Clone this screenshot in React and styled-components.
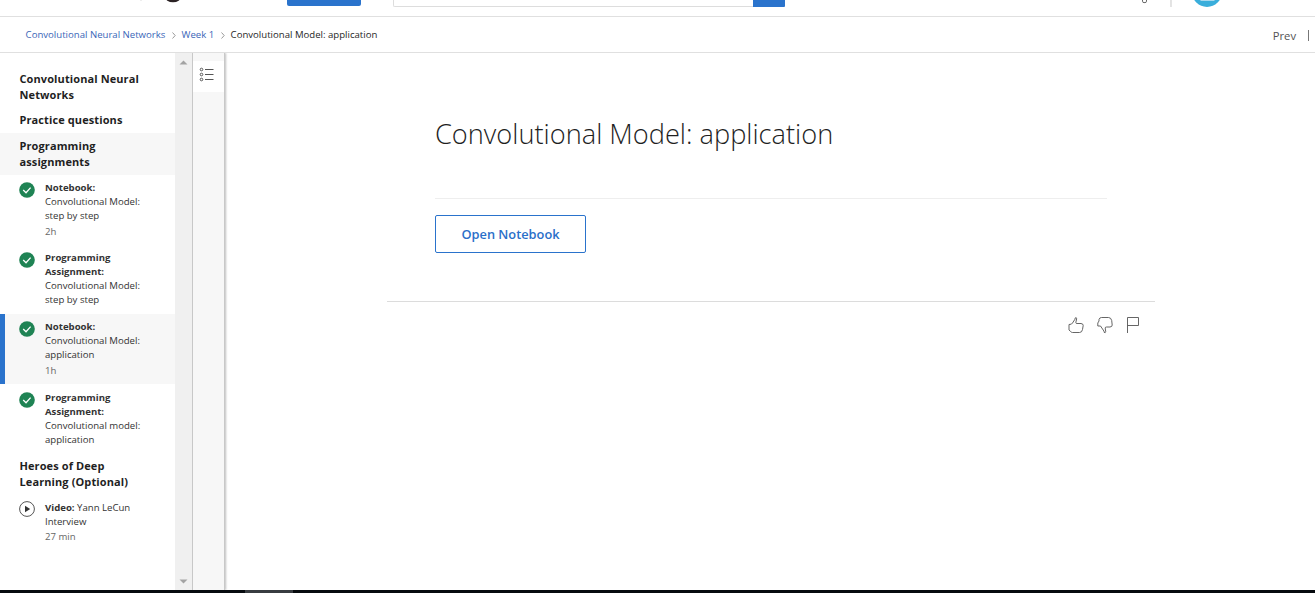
import React from "react";
import styled, { createGlobalStyle } from "styled-components";

const Global = createGlobalStyle`
  * { box-sizing: border-box; }
  body { margin: 0; background: #fff; overflow: hidden; font-family: "Open Sans", "Noto Sans", sans-serif; color: #1f1f1f; }
  #root { height: 593px; }
`;

const Page = styled.div`
  display: flex;
  flex-direction: column;
  height: 593px;
  overflow: hidden;
`;

const Header = styled.header`
  display: flex;
  align-items: flex-start;
  height: 17px;
  flex: none;
  border-bottom: 1px solid #e0e0e0;
`;
const Logo = styled.svg`
  width: 60px;
  height: 8px;
  margin-left: 130px;
`;
const CatalogButton = styled.div`
  width: 74px;
  height: 6px;
  margin-left: 97px;
  background: #2a73cc;
  border-radius: 0 0 2px 2px;
`;
const SearchField = styled.div`
  width: 360px;
  height: 7px;
  margin-left: 32px;
  border: 1px solid #ddd;
  border-width: 0 0 1px 1px;
  border-radius: 0 0 0 2px;
`;
const SearchButton = styled.div`
  width: 32px;
  height: 7px;
  background: #2a73cc;
  border-radius: 0 0 1px 0;
`;
const AccountMarks = styled.svg`
  width: 100px;
  height: 8px;
  margin-left: 345px;
`;

const Crumbs = styled.nav`
  display: flex;
  align-items: center;
  height: 36px;
  flex: none;
  padding: 1px 0 0 25.6px;
  border-bottom: 1px solid #e0e0e0;
  font-size: 9.6px;
  line-height: 14px;
  white-space: nowrap;
`;
const Crumb = styled.span`
  width: ${(p) => p.$width}px;
  color: ${(p) => (p.$current ? "#1f1f1f" : "#3a66b8")};
`;
const Chevron = styled.svg`
  width: 4px;
  height: 7px;
  margin: 1px 6px 0;
`;
const PrevNav = styled.div`
  display: flex;
  align-items: center;
  margin-left: auto;
  padding-top: 1px;
  font-size: 11.2px;
  color: #525252;
`;
const PrevDivider = styled.i`
  width: 1px;
  height: 11px;
  margin: 0 6px 1px 12px;
  background: #777;
`;

const Body = styled.div`
  display: flex;
  flex: 1;
  min-height: 0;
`;
const Sidebar = styled.aside`
  width: 175px;
  padding-top: 13px;
`;
const Heading = styled.h2`
  margin: 0;
  height: ${(p) => p.$height}px;
  padding: 5px 20px 0 19.5px;
  background: ${(p) => (p.$active ? "#f7f7f7" : "transparent")};
  font-size: 11px;
  font-weight: 700;
  line-height: 16px;
  letter-spacing: 0.1px;
`;
const Item = styled.div`
  display: flex;
  height: ${(p) => p.$height}px;
  padding-top: ${(p) => p.$top || 6}px;
  padding-left: ${(p) => (p.$active ? 14 : 19)}px;
  border-left: ${(p) => (p.$active ? "5px solid #2a73cc" : "none")};
  background: ${(p) => (p.$active ? "#f7f7f7" : "transparent")};
`;
const ItemIcon = styled.svg`
  width: 16px;
  height: 16px;
  margin: ${(p) => (p.$raised ? 0 : 1)}px 10px 0 0;
  flex: none;
`;
const ItemText = styled.div`
  width: 108px;
  font-size: 9.6px;
  line-height: 14px;
  color: #333;
`;
const Duration = styled.div`
  margin-top: ${(p) => p.$gap}px;
  color: #666;
`;

const Scrollbar = styled.div`
  display: flex;
  flex-direction: column;
  justify-content: space-between;
  width: 17px;
  padding: 7px 4px 6px;
  background: #f0f0f0;
`;
const Arrow = styled.svg`
  width: 9px;
  height: 5px;
`;
const Rail = styled.div`
  width: 33px;
  padding-top: 8px;
  border-left: 1px solid #c8c8c8;
  border-right: 1px solid #c8c8c8;
  background: #f7f7f7;
  box-shadow: 1px 0 2px rgba(0, 0, 0, 0.25);
  clip-path: inset(0 -4px 0 0);
`;
const RailButton = styled.div`
  height: 31px;
  padding: 6px 0 0 6px;
  background: #fff;
`;

const Main = styled.main`
  flex: 1;
  padding: 0 160px 0 162px;
`;
const Content = styled.section`
  height: 249px;
  padding: 61px 48px 0;
  border-bottom: 1px solid #dcdcdc;
`;
const Title = styled.h1`
  margin: 0;
  height: 85px;
  border-bottom: 1px solid #eee;
  font-size: 27.2px;
  font-weight: 300;
  line-height: 39px;
  white-space: nowrap;
`;
const OpenButton = styled.button`
  display: block;
  width: 151px;
  height: 38px;
  margin-top: 16px;
  padding: 0;
  border: 1px solid #2a73cc;
  border-radius: 2px;
  background: #fff;
  color: #2a6fc9;
  font: 600 12.8px "Open Sans", sans-serif;
`;
const Feedback = styled.div`
  display: flex;
  justify-content: flex-end;
  gap: 11px;
  padding: 14px 13px 0 0;
`;
const FeedbackIcon = styled.svg`
  width: 18px;
  height: 18px;
  fill: none;
  stroke: #555;
  stroke-width: 0.9;
`;

const Taskbar = styled.footer`
  height: 3px;
  flex: none;
  padding-left: 245px;
  background: #060a0e;
`;
const TaskbarApp = styled.div`
  width: 48px;
  height: 3px;
  background: #383c40;
`;

const Check = () => (
  <ItemIcon viewBox="0 0 16 16">
    <circle cx="8" cy="8" r="7.8" fill="#1f8354" />
    <path d="M4.2 8.1l2.8 2.6 4.6-5.1" fill="none" stroke="#fff" strokeWidth="1.3" />
  </ItemIcon>
);
const Play = () => (
  <ItemIcon viewBox="0 0 16 16" $raised>
    <circle cx="8" cy="8" r="7.4" fill="none" stroke="#555" />
    <path d="M6 4.8v6.4L11.2 8z" fill="#333" />
  </ItemIcon>
);
const Separator = () => (
  <Chevron viewBox="0 0 4 7">
    <path d="M.5.5l2.7 3-2.7 3" fill="none" stroke="#999" />
  </Chevron>
);

export default function App() {
  return (
    <Page>
      <Global />
      <Header>
        <Logo viewBox="0 0 60 8">
          <path d="M10.5 0h1" stroke="#bbb" />
          <ellipse cx="43" cy="-3" rx="8" ry="5.2" fill="#2b2224" />
        </Logo>
        <CatalogButton />
        <SearchField />
        <SearchButton />
        <AccountMarks viewBox="0 0 100 8">
          <path d="M12.5 0v1.2q0 1.4 1.5 1.4h1q1.5 0 1.5-1.4V0" fill="none" stroke="#666" />
          <path d="M41 0v7" stroke="#ddd" strokeWidth="1.6" />
          <circle cx="77" cy="-8" r="15" fill="#3aaedb" />
          <path d="M70 0h15l-1 1H71z" fill="#a9d9ee" />
        </AccountMarks>
      </Header>
      <Crumbs>
        <Crumb $width={140}>Convolutional Neural Networks</Crumb>
        <Separator />
        <Crumb $width={33}>Week 1</Crumb>
        <Separator />
        <Crumb $width={150} $current>Convolutional Model: application</Crumb>
        <PrevNav>
          Prev
          <PrevDivider />
        </PrevNav>
      </Crumbs>
      <Body>
        <Sidebar>
          <Heading $height={41}>Convolutional Neural Networks</Heading>
          <Heading $height={26}>Practice questions</Heading>
          <Heading $height={42} $active>Programming assignments</Heading>
          <Item $height={70}>
            <Check />
            <ItemText>
              <b>Notebook:</b><br />Convolutional Model:<br />step by step
              <Duration $gap={2}>2h</Duration>
            </ItemText>
          </Item>
          <Item $height={69}>
            <Check />
            <ItemText>
              <b>Programming<br />Assignment:</b><br />Convolutional Model:<br />step by step
            </ItemText>
          </Item>
          <Item $height={70} $active>
            <Check />
            <ItemText>
              <b>Notebook:</b><br />Convolutional Model:<br />application
              <Duration $gap={2}>1h</Duration>
            </ItemText>
          </Item>
          <Item $height={69} $top={7}>
            <Check />
            <ItemText>
              <b>Programming<br />Assignment:</b><br />Convolutional model:<br />application
            </ItemText>
          </Item>
          <Heading $height={41}>Heroes of Deep Learning (Optional)</Heading>
          <Item $height={60} $top={7}>
            <Play />
            <ItemText>
              <b>Video:</b> Yann LeCun<br />Interview
              <Duration $gap={1}>27 min</Duration>
            </ItemText>
          </Item>
        </Sidebar>
        <Scrollbar>
          <Arrow viewBox="0 0 9 5"><path d="M.5 4.5l4-4 4 4z" fill="#a3a3a3" /></Arrow>
          <Arrow viewBox="0 0 9 5"><path d="M.5.5l4 4 4-4z" fill="#a3a3a3" /></Arrow>
        </Scrollbar>
        <Rail>
          <RailButton>
            <svg width="16" height="16" viewBox="0 0 16 16" fill="none" stroke="#555" display="block">
              <circle cx="2.5" cy="2.5" r="1.3" />
              <circle cx="2.5" cy="7.5" r="1.3" />
              <circle cx="2.5" cy="12.5" r="1.3" />
              <path d="M6 2.5h8.5M6 7.5h8.5M6 12.5h8.5" />
            </svg>
          </RailButton>
        </Rail>
        <Main>
          <Content>
            <Title>Convolutional Model: application</Title>
            <OpenButton>Open Notebook</OpenButton>
          </Content>
          <Feedback>
            <FeedbackIcon viewBox="0 0 18 18">
              <path d="M3 8.5Q6 8.500 6.500 7L9 3.200V2.200Q10.500.8 10.700 2.800L9.800 6.500Q9.800 7.500 11 7.500H15Q17.300 7.700 17.200 9.500L16.500 13.500Q16 16.500 13.500 16.500H6.500Q5 16.300 4.300 15.200L3 14Z" />
            </FeedbackIcon>
            <FeedbackIcon viewBox="0 0 18 18">
              <path d="M2.800 10H5.500L9 15.200V16.200Q10.500 17.500 10.700 15.500L10.200 12Q10.200 11 11.500 11H15Q17.300 10.800 17.200 9L16.700 4.500Q16 1.500 13.500 1.500H6.500Q4.500 1.500 4 3.500V5L2.800 7Z" />
            </FeedbackIcon>
            <FeedbackIcon viewBox="0 0 18 18">
              <path d="M3.500 17V1.500h11v8h-11" />
            </FeedbackIcon>
          </Feedback>
        </Main>
      </Body>
      <Taskbar>
        <TaskbarApp />
      </Taskbar>
    </Page>
  );
}
